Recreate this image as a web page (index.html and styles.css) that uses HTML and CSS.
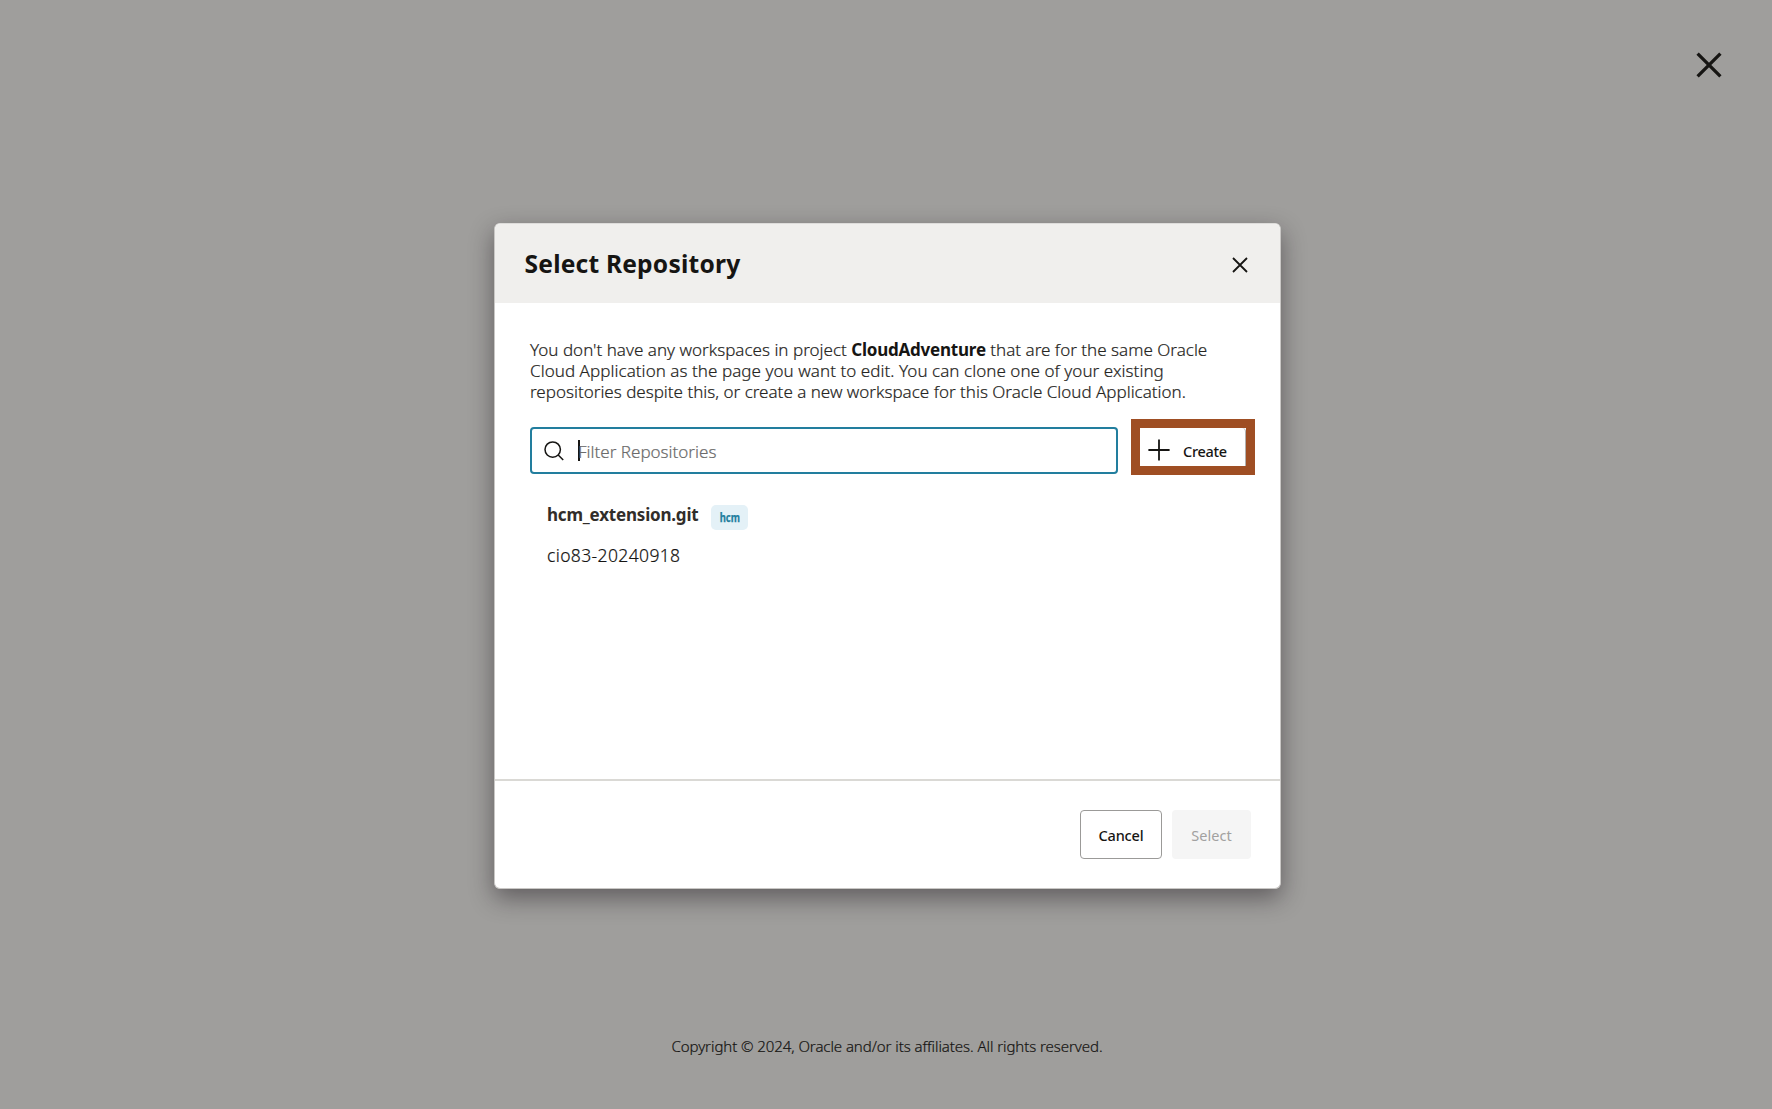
FILE: index.html
```html
<!DOCTYPE html>
<html lang="en">
<head>
<meta charset="utf-8">
<title>Select Repository</title>
<link rel="stylesheet" href="styles.css">
</head>
<body>
<header class="topbar">
  <svg class="page-close" viewBox="0 0 26 26"><path d="M1.6 1.6 24.4 24.4M24.4 1.6 1.6 24.4"/></svg>
</header>
<main class="dialog">
  <div class="dialog-header">
    <h1 class="title">Select Repository</h1>
    <svg class="dialog-close" viewBox="0 0 16 16"><path d="M1 1 15 15M15 1 1 15"/></svg>
  </div>
  <div class="dialog-body">
    <p class="message"><span class="line">You don't have any workspaces in project <b>CloudAdventure</b> that are for the same Oracle</span><span class="line line-middle">Cloud Application as the page you want to edit. You can clone one of your existing</span><span class="line line-last">repositories despite this, or create a new workspace for this Oracle Cloud Application.</span></p>
    <div class="toolbar">
      <div class="search">
        <svg class="search-icon" viewBox="0 0 20 20"><circle cx="8.7" cy="8.6" r="7.7"/><path d="m14.2 14 5 5"/></svg>
        <span class="caret"></span>
        <span class="placeholder">Filter Repositories</span>
      </div>
      <div class="highlight">
        <div class="create">
          <svg class="plus" viewBox="0 0 22 22"><path d="M11 .4v21.2M.4 11h21.2"/></svg>
          <span>Create</span>
        </div>
      </div>
    </div>
    <div class="repo">
      <div class="repo-head">
        <span class="repo-name">hcm_extension.git</span>
        <span class="badge"><span class="badge-text">hcm</span></span>
      </div>
      <div class="repo-sub">cio83-20240918</div>
    </div>
  </div>
  <div class="dialog-footer">
    <div class="button cancel">Cancel</div>
    <div class="button select">Select</div>
  </div>
</main>
<footer class="copyright">Copyright © 2024, Oracle and/or its affiliates. All rights reserved.</footer>
</body>
</html>
```
FILE: styles.css
```css
* { box-sizing: border-box; }
body {
  margin: 0;
  height: 1109px;
  display: flex;
  flex-direction: column;
  overflow: hidden;
  background: #9f9e9c;
  color: #161513;
  font-family: "Noto Sans", sans-serif;
  font-size: 17px;
}
svg { display: block; flex: none; fill: none; stroke: #161513; }
.topbar {
  height: 223px;
  flex: none;
  display: flex;
  justify-content: flex-end;
  padding: 51.6px 50.4px 0 0;
}
.page-close { width: 26px; height: 26px; stroke-width: 3.3; }
.dialog {
  width: 787px;
  height: 666px;
  flex: none;
  margin-left: 494px;
  display: flex;
  flex-direction: column;
  background: #fff;
  border: 1px solid #c9c7c5;
  border-top-color: #dddcda;
  border-radius: 6px;
  box-shadow: 0 9px 24px rgba(22, 15, 21, .46);
}
.dialog-header {
  height: 79px;
  flex: none;
  display: flex;
  align-items: center;
  justify-content: space-between;
  padding: 0 32.4px 0 29.5px;
  background: #f0efed;
  border-radius: 5px 5px 0 0;
}
.title { margin: 0; font-size: 24.6px; line-height: 34px; font-weight: 700; letter-spacing: .2px; }
.dialog-close { width: 16px; height: 16px; margin-top: 2px; stroke-width: 1.8; }
.dialog-body { flex: none; height: 476px; padding: 36px 25px 0 35px; }
.message, .placeholder, .repo-sub, .copyright { font-weight: 300; -webkit-text-stroke: .2px; }
.message { margin: 0; line-height: 21px; letter-spacing: .012px; color: #262522; }
.message b { font-weight: 700; letter-spacing: -.22px; color: #161513; -webkit-text-stroke: 0; }
.line { display: block; white-space: nowrap; }
.line-middle { letter-spacing: .05px; }
.line-last { letter-spacing: 0; }
.toolbar { display: flex; gap: 13px; margin-top: 17px; }
.search {
  width: 588px;
  height: 47px;
  margin-top: 8px;
  display: flex;
  align-items: center;
  padding-left: 12px;
  border: 2px solid #227e9e;
  border-radius: 4px;
}
.search-icon { width: 20px; height: 20px; stroke-width: 1.5; }
.caret { width: 2px; height: 21px; margin-left: 14px; background: #161513; }
.placeholder { margin: 2px 0 0 -2px; color: #6b6b6b; line-height: 24px; }
.highlight { width: 124px; height: 56px; border: 9px solid #9f4e23; }
.create {
  height: 100%;
  display: flex;
  align-items: center;
  gap: 13px;
  padding-left: 8px;
  border-right: 1px solid #b2b1af;
  border-radius: 0 4px 0 0;
  font-size: 14.5px;
  font-weight: 500;
  letter-spacing: -.3px;
}
.plus { width: 22px; height: 22px; margin-top: 6px; stroke-width: 1.8; }
.create span { line-height: 20px; margin-top: 7px; }
.repo { padding: 30px 0 0 17px; }
.repo-head { display: flex; align-items: flex-start; height: 25px; }
.repo-name { width: 164px; font-weight: 700; line-height: 20px; letter-spacing: -.2px; color: #312d2a; }
.badge {
  width: 37px;
  height: 25px;
  display: flex;
  align-items: center;
  justify-content: center;
  border-radius: 5px;
  background: #e4f1f7;
  color: #227e9e;
  font-size: 12px;
  font-weight: 700;
}
.badge-text { transform: scaleX(.79); line-height: 20px; -webkit-text-stroke: .25px; }
.repo-sub { margin-top: 14px; line-height: 23px; font-size: 17.5px; letter-spacing: .37px; }
.dialog-footer {
  flex: 1;
  display: flex;
  justify-content: flex-end;
  gap: 10px;
  padding: 29px 29px 0 0;
  border-top: 2px solid #dad9d5;
}
.button {
  height: 49px;
  display: flex;
  align-items: center;
  justify-content: center;
  border-radius: 4px;
  font-size: 14.5px;
  font-weight: 500;
}
.cancel { width: 82px; border: 1px solid #9b9a98; letter-spacing: -.2px; }
.select { width: 79px; background: #f5f5f5; color: #a2a1a0; font-weight: 400; }
.copyright {
  margin-top: 146px;
  padding-left: 2px;
  text-align: center;
  font-size: 15px;
  line-height: 22px;
  letter-spacing: -.07px;
}
```
